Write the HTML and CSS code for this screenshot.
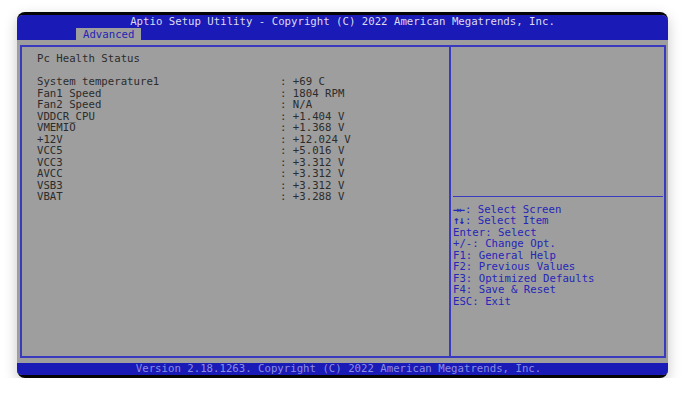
FILE: index.html
```html
<!DOCTYPE html>
<html lang="en">
<head>
  <meta charset="UTF-8">
  <meta name="viewport" content="width=device-width, initial-scale=1.0">
  <title>Aptio Setup Utility</title>
  <link rel="stylesheet" href="styles.css">
</head>
<body>
  <div class="monitor">
    <div class="screen">

      <div class="header">
        <div class="title">Aptio Setup Utility - Copyright (C) 2022 American Megatrends, Inc.</div>
        <div class="tabs">
          <span class="tab">Advanced</span>
        </div>
      </div>

      <div class="frame">
        <div class="main">
          <div class="page-title">Pc Health Status</div>
          <div class="rows">
            <div class="row"><span class="label">System temperature1</span><span class="value">: +69 C</span></div>
            <div class="row"><span class="label">Fan1 Speed</span><span class="value">: 1804 RPM</span></div>
            <div class="row"><span class="label">Fan2 Speed</span><span class="value">: N/A</span></div>
            <div class="row"><span class="label">VDDCR_CPU</span><span class="value">: +1.404 V</span></div>
            <div class="row"><span class="label">VMEMIO</span><span class="value">: +1.368 V</span></div>
            <div class="row"><span class="label">+12V</span><span class="value">: +12.024 V</span></div>
            <div class="row"><span class="label">VCC5</span><span class="value">: +5.016 V</span></div>
            <div class="row"><span class="label">VCC3</span><span class="value">: +3.312 V</span></div>
            <div class="row"><span class="label">AVCC</span><span class="value">: +3.312 V</span></div>
            <div class="row"><span class="label">VSB3</span><span class="value">: +3.312 V</span></div>
            <div class="row"><span class="label">VBAT</span><span class="value">: +3.288 V</span></div>
          </div>
        </div>

        <div class="side">
          <div class="side-top"></div>
          <div class="help">
            <div><span class="arrows">&rarr;&larr;</span>: Select Screen</div>
            <div><span class="arrows">&uarr;&darr;</span>: Select Item</div>
            <div>Enter: Select</div>
            <div>+/-: Change Opt.</div>
            <div>F1: General Help</div>
            <div>F2: Previous Values</div>
            <div>F3: Optimized Defaults</div>
            <div>F4: Save &amp; Reset</div>
            <div>ESC: Exit</div>
          </div>
        </div>
      </div>

      <div class="footer">Version 2.18.1263. Copyright (C) 2022 American Megatrends, Inc.</div>

    </div>
  </div>
</body>
</html>
```

FILE: styles.css
```css
*{
  margin:0;
  padding:0;
  box-sizing: border-box;
}

body{
  background-color: #ffffff;
  font-family: "DejaVu Sans Mono", "Liberation Mono", monospace;
  font-size: 10.7px;
  line-height: 11.5px;
}

/* black bezel round the screen, top and bottom only */
.monitor{
  width: 651px;
  height: 366px;
  margin: 12px 0 0 17px;
  padding: 3px 0 3px;
  background-color: #050505;
  border-radius: 8px;
  box-shadow: 0 5px 14px rgba(0,0,0,0.22);
}

.screen{
  height: 100%;
  background-color: #9e9e9e;
  border-radius: 6px 6px 5px 5px;
  overflow: hidden;
  display: flex;
  flex-direction: column;
}

.header{
  height: 25px;
  background-color: #1a1ab6;
  color: #dcdcf0;
  .title{
    text-align: center;
    height: 13px;
    line-height: 14px;
  }
  .tabs{
    padding-left: 59px;
    height: 12px;
  }
  .tab{
    display: inline-block;
    background-color: #9e9e9e;
    color: #2424b4;
    padding: 0 7px 0 7px;
    height: 12px;
    line-height: 13px;
  }
}

.frame{
  margin: 5px 2px 0 3px;
  height: 313px;
  border: 2px solid #3a3abe;
  display: flex;
}

.main{
  width: 429px;
  border-right: 2px solid #3a3abe;
  padding: 6px 0 0 15px;
  color: #2c2c2c;

  .page-title{
    margin-bottom: 11.5px;
  }
  .row{
    display: flex;
  }
  .label{
    width: 243px;
  }
}

.side{
  flex: 1;
  display: flex;
  flex-direction: column;
  padding: 0 1px 0 2px;

  .side-top{
    height: 150px;
    border-bottom: 1px solid #3a3abe;
  }
  .help{
    padding-top: 6.5px;
    color: #2626b8;
  }
  .arrows{
    font-weight: bold;
    letter-spacing: -1px;
    margin-right: 1px;
  }
}

.footer{
  margin-top: 5px;
  height: 12px;
  background-color: #1a1ab6;
  color: #8c8ce4;
  text-align: center;
  line-height: 12px;
  padding-right: 8px;
}
```
